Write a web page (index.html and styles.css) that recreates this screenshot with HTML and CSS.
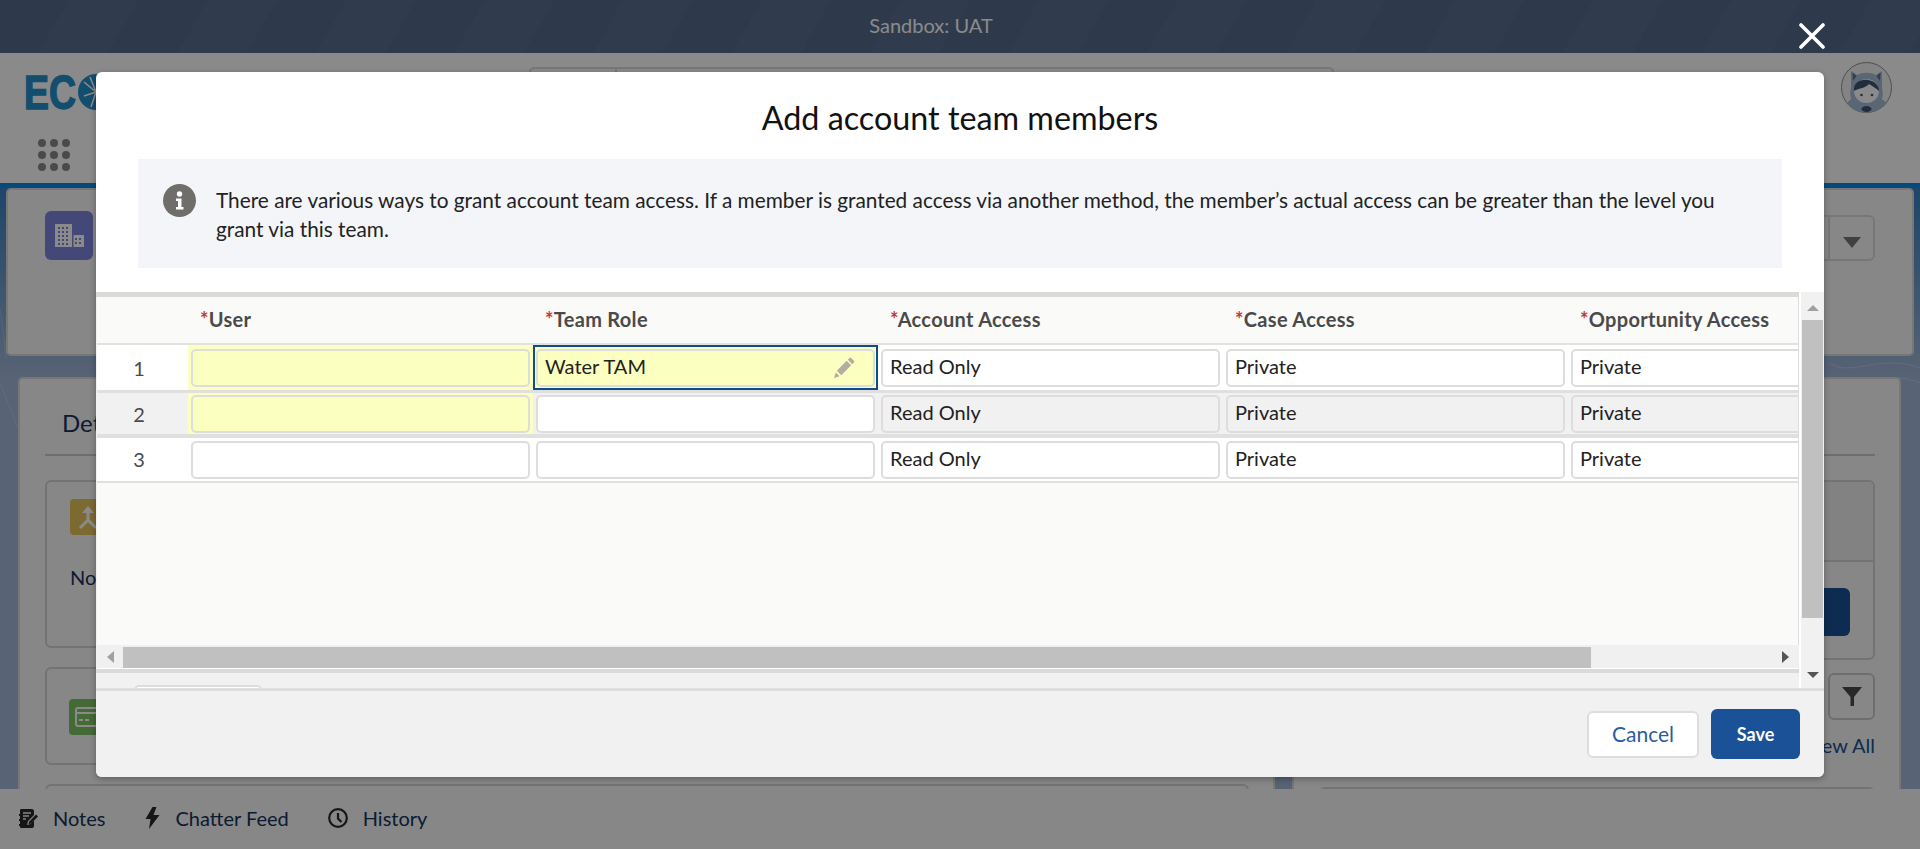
FILE: index.html
```html
<!DOCTYPE html>
<html lang="en">
<head>
  <meta charset="UTF-8" />
  <title>Add account team members</title>
  <link rel="stylesheet" href="styles.css">
</head>
<body>
  <div class="page">
    <div class="sandbox-bar">Sandbox: UAT</div>

    <header class="global-header">
      <div class="header-top">
        <svg class="logo" width="120" height="56" viewBox="0 0 120 56">
          <text class="logo-text" x="0" y="44" textLength="52" lengthAdjust="spacingAndGlyphs">EC</text>
          <circle cx="72" cy="27" r="18" fill="#2490cc"/>
          <path d="M72 27 60 17M72 27 66 12M72 27 60 31M72 27 67 42" stroke="#fff" stroke-width="1.6"/>
        </svg>
        <div class="search-box">
          <div class="search-scope"></div>
          <div class="search-input"></div>
        </div>
        <svg class="avatar" width="51" height="51" viewBox="0 0 51 51">
          <circle cx="25.5" cy="25.5" r="25" fill="#f4f4f4" stroke="#8f8f8f"/>
          <path d="M10 9 16 13C21 10 30 10 35 13L41 9 41 26C42 30 42 34 41 37L46 41C40 48 32 50.500 25 50.500 17 50.500 10 47 6 41L10 37C9 33 9 29 10 26Z" fill="#a9bdd8"/>
          <path d="M11.500 10.500 15.500 14 12 19ZM39.500 10.500 35.500 14 39 19Z" fill="#5d7494"/>
          <ellipse cx="25.500" cy="29" rx="12.500" ry="12" fill="#fff"/>
          <path d="M13 29C12 20 20 17 27 18 33 19 38.500 23 38 29 35 26 31 24 28 22 25 26 18 26 13 29Z" fill="#3f5573"/>
          <circle cx="20.500" cy="33" r="1.300" fill="#3f5573"/>
          <circle cx="31" cy="33" r="1.300" fill="#3f5573"/>
          <ellipse cx="25.500" cy="47" rx="5" ry="3" fill="#3f5573"/>
        </svg>
      </div>
      <div class="launcher">
        <span></span><span></span><span></span>
        <span></span><span></span><span></span>
        <span></span><span></span><span></span>
      </div>
    </header>

    <div class="content">
      <svg class="topo" width="1920" height="600" viewBox="0 0 1920 600" fill="none">
        <path d="M1830 175C1850 190 1880 165 1920 180M1835 190C1860 205 1885 180 1920 195" stroke="#fff" stroke-opacity=".25"/>
        <path d="M0 195C6 210 12 225 18 240M0 120C3 140 5 160 6 170" stroke="#fff" stroke-opacity=".2"/>
      </svg>

      <section class="record-card">
        <svg class="record-icon" width="48" height="49" viewBox="0 0 48 49">
          <path d="M10 13H27V24H39V36H10Z" fill="#fff"/>
          <path d="M13 16h2v2h-2zM17 16h2v2h-2zM21 16h2v2h-2zM13 20h2v2h-2zM17 20h2v2h-2zM21 20h2v2h-2zM13 24h2v2h-2zM17 24h2v2h-2zM21 24h2v2h-2zM13 28h2v2h-2zM17 28h2v2h-2zM21 28h2v2h-2zM13 32h2v2h-2zM17 32h2v2h-2zM21 32h2v2h-2zM30 27h2v2h-2zM34 27h2v2h-2zM30 31h2v2h-2zM34 31h2v2h-2z" fill="#7f86e0"/>
          <path d="M27 13h1.5v23H27z" fill="#7f86e0"/>
        </svg>
        <div class="record-actions">
          <div class="action-btn"></div>
          <div class="action-btn action-menu"><span class="caret-down"></span></div>
        </div>
      </section>

      <div class="columns">
        <section class="panel">
          <h2 class="panel-title">Details</h2>
          <div class="box box-first">
            <div class="box-icon icon-yellow">
              <svg width="36" height="36" viewBox="0 0 36 36" fill="none" stroke="#fff" stroke-width="3">
                <path d="M18 10V21L10 29M18 21 26 29"/>
                <path d="M12 14 18 7 24 14" fill="#fff" stroke="none"/>
              </svg>
            </div>
            <p class="box-text">No records</p>
          </div>
          <div class="box box-second">
            <div class="box-icon icon-green">
              <svg width="36" height="36" viewBox="0 0 36 36" fill="none" stroke="#fff" stroke-width="2">
                <rect x="7" y="9" width="22" height="18" rx="2"/>
                <path d="M7 14H29M10 21h4M16 21h4" />
              </svg>
            </div>
          </div>
          <div class="box"></div>
        </section>

        <section class="panel">
          <h2 class="panel-title">Related</h2>
          <div class="box box-related">
            <div class="related-head"></div>
            <div class="related-body"><div class="related-btn"></div></div>
          </div>
          <div class="filter-row">
            <div class="filter-btn">
              <svg width="20" height="19" viewBox="0 0 20 19"><path d="M0 0H20L12 10V19H8.5V10Z" fill="#4a4a4a"/></svg>
            </div>
          </div>
          <a class="view-all">View All</a>
          <div class="box"></div>
        </section>
      </div>
    </div>

    <footer class="dock">
      <div class="dock-item">
        <svg width="19" height="19" viewBox="0 0 19 19">
          <path d="M2 0H13C14 0 15 1 15 2V6L9 12 8 16 11.500 15 15 11.500V17C15 18 14 19 13 19H2C1 19 1 18 1 17H0V15H1V12H0V10H1V7H0V5H1V2C1 1 1 0 2 0Z" fill="#2a2a2a"/>
          <path d="M4 4H12M4 7H10M4 10H7" stroke="#f9f9f9" stroke-width="1.300"/>
          <path d="M17 5.500 19 7.500 12 14.500 9.500 15.200 10.300 12.500Z" fill="#2a2a2a"/>
        </svg>
        Notes
      </div>
      <div class="dock-item">
        <svg width="16" height="22" viewBox="0 0 15 22"><path d="M8 0 1 12H6L4.500 22 15 8H9L12 0Z" fill="#2a2a2a"/></svg>
        Chatter Feed
      </div>
      <div class="dock-item">
        <svg width="20" height="20" viewBox="0 0 20 20" fill="none" stroke="#2a2a2a" stroke-width="2.200"><circle cx="10" cy="10" r="8.800"/><path d="M10 5V10.500L13.500 14"/></svg>
        History
      </div>
    </footer>

    <div class="backdrop"></div>

    <button class="modal-close" aria-label="Close">
      <svg width="26" height="26" viewBox="0 0 26 26"><path d="M2 2 24 24M24 2 2 24" stroke="#fff" stroke-width="3.600" stroke-linecap="round"/></svg>
    </button>

    <div class="modal">
      <h1 class="modal-title">Add account team members</h1>

      <div class="info-box">
        <svg class="info-icon" width="33" height="33" viewBox="0 0 33 33">
          <circle cx="16.500" cy="16.500" r="16.500" fill="#706e6b"/>
          <circle cx="16.500" cy="10" r="2.700" fill="#fff"/>
          <path d="M13 14.500H18.500V23H20.500V25.500H13V23H15V17H13Z" fill="#fff"/>
        </svg>
        <p>There are various ways to grant account team access. If a member is granted access via another method, the member’s actual access can be greater than the level you grant via this team.</p>
      </div>

      <div class="grid-wrap">
        <div class="grid-main">
          <div class="grid-body">
            <div class="grid-row head-row">
              <div></div>
              <div class="head-cell"><span class="req">*</span>User</div>
              <div class="head-cell"><span class="req">*</span>Team Role</div>
              <div class="head-cell"><span class="req">*</span>Account Access</div>
              <div class="head-cell"><span class="req">*</span>Case Access</div>
              <div class="head-cell"><span class="req">*</span>Opportunity Access</div>
            </div>

            <div class="grid-row row-one">
              <div class="row-num">1</div>
              <div class="cell cell-required"><div class="field field-required"></div></div>
              <div class="cell cell-required cell-active">
                <div class="field field-required">Water TAM
                  <svg class="pencil" width="22" height="22" viewBox="0 0 20 20"><path d="M3.500 12.500 12.500 3.500 16.500 7.500 7.500 16.500ZM2.500 14 6 17.500 1 19ZM13.500 2.500 15 1C15.500.5 16 .5 16.500 1L19 3.500C19.500 4 19.500 4.500 19 5L17.500 6.500Z" fill="#aeaea6"/></svg>
                </div>
              </div>
              <div class="cell"><div class="field">Read Only</div></div>
              <div class="cell"><div class="field">Private</div></div>
              <div class="cell"><div class="field">Private</div></div>
            </div>

            <div class="grid-row row-two">
              <div class="row-num">2</div>
              <div class="cell cell-required"><div class="field field-required"></div></div>
              <div class="cell"><div class="field"></div></div>
              <div class="cell"><div class="field field-off">Read Only</div></div>
              <div class="cell"><div class="field field-off">Private</div></div>
              <div class="cell"><div class="field field-off">Private</div></div>
            </div>

            <div class="grid-row row-three">
              <div class="row-num">3</div>
              <div class="cell"><div class="field"></div></div>
              <div class="cell"><div class="field"></div></div>
              <div class="cell"><div class="field">Read Only</div></div>
              <div class="cell"><div class="field">Private</div></div>
              <div class="cell"><div class="field">Private</div></div>
            </div>
          </div>

          <div class="hscroll">
            <span class="arrow-left"></span>
            <div class="hscroll-thumb"></div>
            <span class="arrow-right"></span>
          </div>

          <div class="grid-under"><div class="add-row"></div></div>
        </div>

        <div class="vscroll">
          <span class="arrow-up"></span>
          <div class="vscroll-thumb"></div>
          <span class="arrow-down"></span>
        </div>
      </div>

      <div class="modal-footer">
        <button class="btn btn-cancel">Cancel</button>
        <button class="btn btn-save">Save</button>
      </div>
    </div>
  </div>
</body>
</html>
```

FILE: styles.css
```css
* {
  margin: 0;
  padding: 0;
  box-sizing: border-box;
}

body {
  font-family: Lato, "Open Sans", sans-serif;
  font-size: 20px;
  color: #222;
  overflow: hidden;
}

.page {
  position: relative;
  width: 1920px;
  height: 849px;
  display: flex;
  flex-direction: column;
  overflow: hidden;
}

/* page behind the modal */
.sandbox-bar {
  height: 53px;
  flex: none;
  display: flex;
  align-items: center;
  justify-content: center;
  padding: 0 58px 3px 0;
  color: #fff;
  background: repeating-linear-gradient(120deg, #566a8c 0 60px, #596e90 60px 120px);
}

.global-header {
  height: 135px;
  flex: none;
  background: #fff;
  border-bottom: 5px solid #0a8ae6;
  padding: 14px 0 0 24px;
}

.header-top {
  height: 72px;
  display: grid;
  grid-template-columns: 505px 805px 1fr;
  align-items: start;
}

.logo {
  margin-top: -2px;
}

.logo-text {
  font-family: "Liberation Sans", sans-serif;
  font-weight: 700;
  font-size: 48px;
  fill: #2490cc;
  stroke: #2490cc;
  stroke-width: 1.5px;
}

.search-box {
  height: 40px;
  border: 2px solid #ddd;
  border-radius: 5px;
  display: flex;
}

.search-scope {
  width: 86px;
  border-right: 2px solid #ddd;
}

.avatar {
  justify-self: end;
  margin: -5px 28px 0 0;
}

.launcher {
  width: 32px;
  margin-left: 14px;
  display: grid;
  grid-template-columns: repeat(3, 8px);
  gap: 4px;
}

.launcher span {
  height: 8px;
  border-radius: 50%;
  background: #8a8a8a;
}

.content {
  position: relative;
  flex: 1;
  overflow: hidden;
  padding: 0 6px;
  background: linear-gradient(180deg, #3a80c0 0, #a3b8d8 190px);
}

.topo {
  position: absolute;
  top: 0;
  left: 0;
}

.record-card {
  position: relative;
  height: 168px;
  background: #fafafa;
  border: 2px solid #ddd;
  border-radius: 5px;
  padding: 21px 37px 0;
  display: flex;
  justify-content: space-between;
  align-items: flex-start;
}

.record-icon {
  background: #7f86e0;
  border-radius: 6px;
}

.record-actions {
  display: flex;
  margin-top: 4px;
  border: 2px solid #ddd;
  border-radius: 6px;
}

.action-btn {
  width: 100px;
  height: 42px;
}

.action-menu {
  width: 45px;
  border-left: 2px solid #ddd;
  display: flex;
  justify-content: center;
  padding-top: 20px;
}

.caret-down {
  width: 0;
  height: 0;
  border-left: 9px solid transparent;
  border-right: 9px solid transparent;
  border-top: 11px solid #777;
}

.columns {
  position: relative;
  display: grid;
  grid-template-columns: 1257px 609px;
  gap: 17px;
  padding: 21px 7px 0 12px;
}

.panel {
  height: 460px;
  background: #fafafa;
  border: 2px solid #ddd;
  border-radius: 5px;
  padding: 0 24px 0 25px;
}

.panel-title {
  height: 77px;
  padding: 29px 0 0 17px;
  border-bottom: 2px solid #ccc;
  font-size: 24px;
  font-weight: 400;
  color: #16325c;
}

.box {
  border: 2px solid #d5d5d5;
  border-radius: 6px;
  margin-top: 19px;
  height: 120px;
}

.box-first {
  margin-top: 24px;
  height: 168px;
  padding: 17px 23px;
}

.box-second {
  height: 98px;
  padding: 30px 22px;
}

.box-icon {
  width: 36px;
  height: 36px;
  border-radius: 4px;
}

.icon-yellow {
  background: #e8c55a;
}

.icon-green {
  background: #7fc562;
}

.box-text {
  margin-top: 30px;
  font-size: 20px;
  color: #16325c;
}

.box-related {
  margin-top: 24px;
  height: 180px;
}

.related-head {
  height: 80px;
  background: #f1f1f1;
  border-bottom: 2px solid #d5d5d5;
  border-radius: 4px 4px 0 0;
}

.related-body {
  display: flex;
  justify-content: flex-end;
  padding: 26px 23px 0 0;
}

.related-btn {
  width: 200px;
  height: 48px;
  background: #1b5297;
  border-radius: 6px;
}

.filter-row {
  display: flex;
  justify-content: flex-end;
  margin-top: 13px;
}

.filter-btn {
  width: 47px;
  height: 47px;
  border: 2px solid #ccc;
  border-radius: 6px;
  display: flex;
  align-items: center;
  justify-content: center;
}

.view-all {
  display: block;
  text-align: right;
  margin: 13px 0 30px;
  line-height: 24px;
  color: #1b5297;
}

.dock {
  height: 60px;
  flex: none;
  background: #f9f9f9;
  display: flex;
  align-items: center;
  padding: 0 0 2px 19px;
  gap: 39px;
  color: #16325c;
}

.dock-item {
  display: flex;
  align-items: center;
  gap: 15px;
}

/* modal */
.backdrop {
  position: absolute;
  inset: 0;
  background: rgba(0, 0, 0, 0.46);
}

.modal-close {
  position: absolute;
  top: 23px;
  left: 1799px;
  width: 26px;
  height: 26px;
  background: none;
  border: none;
}

.modal {
  position: absolute;
  top: 72px;
  left: 96px;
  width: 1728px;
  height: 705px;
  background: #fff;
  border-radius: 6px;
  overflow: hidden;
  display: flex;
  flex-direction: column;
  box-shadow: 0 2px 6px rgba(0, 0, 0, 0.3);
}

.modal-title {
  height: 87px;
  flex: none;
  padding-top: 25px;
  text-align: center;
  font-size: 32.3px;
  line-height: 42px;
  font-weight: 400;
  color: #111;
}

.info-box {
  height: 109px;
  flex: none;
  margin: 0 42px 24px;
  padding: 26px 60px 0 25px;
  background: #f3f5f9;
  display: flex;
  gap: 20px;
  font-size: 20.8px;
  line-height: 29px;
}

.info-icon {
  flex: none;
  margin-top: -1px;
}

.grid-wrap {
  height: 396px;
  flex: none;
  display: flex;
  background: #f1f1f1;
}

.grid-main {
  width: 1703px;
  flex: none;
  display: flex;
  flex-direction: column;
  border-top: 5px solid #dcdad6;
}

.grid-body {
  flex: 1;
  background: #fafaf8;
  overflow: hidden;
  margin-left: 1px;
  border-right: 1px solid #ddd;
}

.grid-row {
  display: grid;
  grid-template-columns: 91px repeat(5, 345px);
}

.head-row {
  height: 48px;
  border-bottom: 2px solid #e2e2e0;
}

.head-cell {
  padding: 10px 0 0 12px;
  font-weight: 700;
  letter-spacing: 0.3px;
  color: #4a4a4a;
}

.req {
  color: #c23934;
}

.row-one,
.row-three {
  background: #fff;
}

.row-one {
  height: 48px;
  border-bottom: 3px solid #e0e0de;
}

.row-two {
  height: 45px;
  background: #f1f1f1;
  border-bottom: 4px solid #e0e0de;
}

.row-three {
  height: 45px;
  border-bottom: 2px solid #e0e0de;
}

.row-num {
  padding: 11px 7px 0 0;
  text-align: center;
  line-height: 24px;
  color: #4a4a4a;
}

.row-two .row-num {
  padding-top: 9px;
}

.row-three .row-num {
  padding-top: 9px;
}

.cell {
  padding: 3px 3px 0;
}

.row-one .cell {
  padding-top: 4px;
}

.row-two .cell {
  padding-top: 2px;
}

.cell-required {
  background: #fbffbf;
}

.cell-active {
  box-shadow: inset 0 0 0 2px #0f4c8a;
}

.field {
  position: relative;
  height: 38px;
  padding: 0 7px;
  background: #fff;
  border: 2px solid #ddd;
  border-radius: 5px;
  line-height: 30px;
  white-space: nowrap;
}

.field-required {
  background: #fbffbf;
}

.field-off {
  background: #f1f1f1;
}

.pencil {
  position: absolute;
  top: 6px;
  right: 18px;
}

.hscroll {
  height: 24px;
  flex: none;
  display: flex;
  align-items: flex-end;
  background: #f0f0f0;
  border-bottom: 1px solid #fff;
  padding-left: 10px;
  margin-left: 1px;
}

.hscroll-thumb {
  width: 1468px;
  height: 21px;
  margin-left: 9px;
  background: #c0c0c0;
}

.arrow-left,
.arrow-right {
  width: 0;
  height: 0;
  align-self: center;
  border-top: 6px solid transparent;
  border-bottom: 6px solid transparent;
}

.arrow-left {
  border-right: 7px solid #a0a0a0;
}

.arrow-right {
  border-left: 7px solid #555;
  margin-left: 191px;
}

.grid-under {
  height: 19px;
  flex: none;
  border-top: 4px solid #dcdad6;
  padding: 12px 0 0 38px;
  overflow: hidden;
}

.add-row {
  width: 128px;
  height: 12px;
  background: #fff;
  border: 2px solid #ddd;
  border-radius: 5px;
}

.vscroll {
  width: 25px;
  flex: none;
  display: flex;
  flex-direction: column;
  align-items: center;
  padding-top: 13px;
  border-left: 2px solid #fff;
}

.vscroll-thumb {
  width: 21px;
  height: 298px;
  margin-top: 9px;
  background: #c0c0c0;
}

.arrow-up,
.arrow-down {
  width: 0;
  height: 0;
  border-left: 6px solid transparent;
  border-right: 6px solid transparent;
}

.arrow-up {
  border-bottom: 6px solid #a0a0a0;
}

.arrow-down {
  margin-top: 54px;
  border-top: 6px solid #555;
}

.modal-footer {
  flex: 1;
  display: flex;
  align-items: center;
  justify-content: flex-end;
  gap: 12px;
  padding-right: 24px;
  background: #f1f1f1;
  border-top: 3px solid #ddd;
}

.btn {
  font-family: inherit;
  font-size: 20px;
  border-radius: 6px;
}

.btn-cancel {
  width: 112px;
  height: 47px;
  padding-bottom: 2px;
  background: #fff;
  border: 2px solid #ddd;
  font-size: 21px;
  color: #2a5c9e;
}

.btn-save {
  width: 89px;
  height: 50px;
  background: #1b5297;
  border: none;
  color: #fff;
  font-weight: 700;
  font-size: 18px;
}
```
